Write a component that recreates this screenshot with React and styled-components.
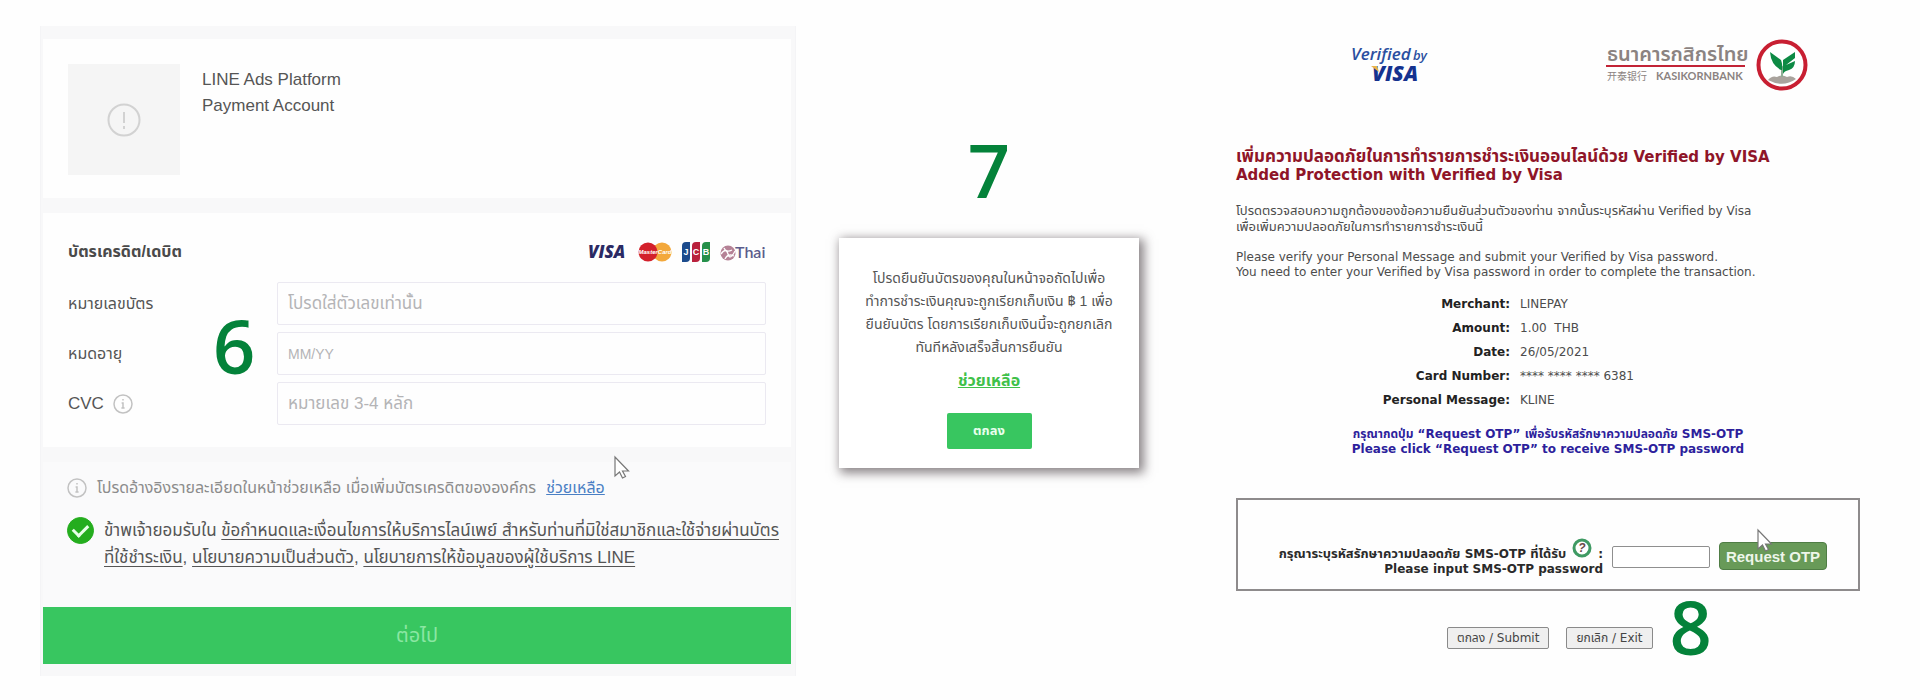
import React, { useState } from 'react'
import styled, { createGlobalStyle } from 'styled-components'

const GlobalStyle = createGlobalStyle`
  * {
    box-sizing: border-box;
  }
  body {
    margin: 0;
    background: #fefefe;
    font-family: "Liberation Sans", "Noto Sans Thai", sans-serif;
    color: #555;
  }
  p, h1, h2 {
    margin: 0;
  }
  input, button {
    font-family: inherit;
  }
  svg {
    flex: none;
    overflow: visible;
  }
`
const Page = styled.main`
  display: grid;
  grid-template-columns: minmax(0, 756fr) minmax(0, 300fr) minmax(0, 678fr);
  gap: 43px;
  align-items: start;
  padding: 26px 60px 24px 40px;
`
const Step = styled.div`
  color: #04823a;
  font-family: "Open Sans", sans-serif;
  font-size: 74px;
  font-weight: 600;
  line-height: 72px;
`

/* payment form */
const Panel = styled.form`
  position: relative;
  background: #f8f8f9;
  padding: 13px 4px 12px 2px;
  border-left: 1px solid #f4f4f6;
  border-right: 1px solid #f4f4f6;
`
const Section = styled.section`
  background: #fefefe;
  margin-bottom: 15px;
  padding: ${p => p.$pad};
`
const Account = styled.div`
  display: flex;
  gap: 22px;
`
const Thumb = styled.div`
  width: 112px;
  height: 111px;
  background: #f5f5f5;
  display: grid;
  place-items: center;
`
const AccountName = styled.p`
  padding-top: 3px;
  font-size: 17px;
  line-height: 26px;
`
const SectionHead = styled.div`
  display: flex;
  justify-content: space-between;
  align-items: center;
  height: 26px;
  margin-bottom: 17px;
`
const SectionTitle = styled.h2`
  font-size: 16px;
  font-weight: 700;
  color: #4a4a4a;
`
const Brands = styled.div`
  display: flex;
  align-items: center;
  gap: 10px;
`
const Field = styled.div`
  display: grid;
  grid-template-columns: 209px minmax(0, 1fr);
  align-items: center;
  & + & {
    margin-top: 7px;
  }
`
const FieldLabel = styled.label`
  display: flex;
  align-items: center;
  gap: 9px;
  font-size: ${p => p.$latin ? '17px' : '16px'};
  color: #555;
`
const TextInput = styled.input`
  width: 100%;
  height: 43px;
  padding: 0 10px;
  border: 1px solid #ebe9f1;
  border-radius: 2px;
  background: #fefefe;
  font-size: ${p => p.$latin ? '14px' : '17px'};
  outline: none;
  &::placeholder {
    color: #b4b4b6;
    opacity: 1;
  }
`
const Terms = styled.section`
  padding: 11px 20px 36px 24px;
  background: #fafafb;
`
const Notice = styled.div`
  display: flex;
  align-items: center;
  gap: 10px;
  height: 30px;
  font-size: 16px;
  color: #8c8c8c;
  white-space: nowrap;
`
const HelpLink = styled.a`
  color: #4a7fc4;
`
const Agree = styled.div`
  display: flex;
  gap: 10px;
  margin-top: 14px;
`
const Check = styled.input`
  appearance: none;
  flex: none;
  width: 27px;
  height: 27px;
  margin: 0;
  border-radius: 50%;
  border: 1px solid #24ad1e;
  display: grid;
  place-items: center;
  &:checked {
    background: #24ad1e;
  }
  &:checked::after {
    content: "";
    width: 12px;
    height: 7px;
    margin-bottom: 3px;
    border-left: 3px solid #e8ffe8;
    border-bottom: 3px solid #e8ffe8;
    rotate: -45deg;
  }
`
const AgreeText = styled.label`
  font-size: 17px;
  line-height: 27px;
  white-space: nowrap;
  a {
    color: #555;
    text-underline-offset: 3px;
  }
`
const NextButton = styled.button`
  display: block;
  width: 100%;
  height: 57px;
  border: none;
  background: #38c660;
  color: #8be6a3;
  font-size: 20px;
`
const StepSix = styled(Step)`
  position: absolute;
  left: 172px;
  top: 284px;
`
const Cursor = styled.svg`
  position: absolute;
  left: ${p => p.$left};
  top: ${p => p.$top};
`

/* confirm dialog */
const Middle = styled.section`
  display: flex;
  flex-direction: column;
  align-items: center;
  padding-top: 108px;
`
const Dialog = styled.div`
  width: 100%;
  margin-top: 32px;
  padding: 29px 16px 19px;
  background: #fff;
  box-shadow: 3px 3px 10px 2px rgba(60, 50, 55, 0.6);
  text-align: center;
`
const DialogText = styled.p`
  font-size: 14px;
  line-height: 23px;
  white-space: nowrap;
`
const DialogHelp = styled.a`
  display: block;
  margin: 10px 0 21px;
  font-size: 16px;
  line-height: 23px;
  font-weight: 700;
  color: #3fc14a;
`
const OkButton = styled.button`
  width: 85px;
  height: 36px;
  border: none;
  border-radius: 2px;
  background: #38c660;
  color: #e9ffee;
  font-size: 13px;
  font-weight: 700;
`

/* bank page */
const Bank = styled.section`
  padding-left: 54px;
  font-family: "DejaVu Sans", "Noto Sans Thai", sans-serif;
  font-size: 12px;
  line-height: 15px;
  color: #4c4c4c;
`
const Logos = styled.header`
  display: flex;
  justify-content: space-between;
  padding: 12px 52px 0 114px;
`
const BankBrand = styled.div`
  display: flex;
  gap: 10px;
`
const Thai = styled.span`
  font-size: ${p => p.$large ? '17px' : '13px'};
`
const Title = styled.h1`
  margin-top: 57px;
  font-size: 15px;
  line-height: 18px;
  color: #8f1528;
  white-space: nowrap;
`
const Copy = styled.p`
  margin-top: ${p => p.$gap};
  white-space: nowrap;
`
const Details = styled.table`
  margin-top: 12px;
  border-collapse: collapse;
  th, td {
    height: 24px;
    padding: 0;
    white-space: pre;
  }
  th {
    width: 274px;
    text-align: right;
    color: #222;
  }
  td {
    padding-left: 10px;
  }
`
const Hint = styled.p`
  margin-top: 15px;
  text-align: center;
  font-weight: 700;
  color: #2d1f9c;
  white-space: nowrap;
`
const OtpBox = styled.div`
  position: relative;
  display: flex;
  justify-content: flex-end;
  align-items: flex-start;
  gap: 9px;
  height: 93px;
  margin-top: 41px;
  padding: 42px 31px 0 0;
  border: 2px solid #8e8b8c;
`
const OtpLabel = styled.label`
  text-align: right;
  font-weight: 700;
  color: #2a2a2a;
  white-space: nowrap;
`
const OtpLine = styled.span`
  display: flex;
  justify-content: flex-end;
  align-items: flex-end;
  gap: 6px;
  height: ${p => p.$tall ? '20px' : '15px'};
  svg {
    margin-bottom: 4px;
  }
`
const OtpInput = styled.input`
  width: 98px;
  height: 22px;
  margin-top: 4px;
  border: 1px solid #8f8f8f;
  border-radius: 2px;
  background: #fff;
`
const OtpButton = styled.button`
  width: 108px;
  height: 28px;
  padding: 0;
  border: 1px solid #4f7d45;
  border-radius: 4px;
  background: #689a58;
  color: #eef6ea;
  font-family: "Liberation Sans", sans-serif;
  font-size: 15px;
  font-weight: 700;
`
const Actions = styled.div`
  display: flex;
  align-items: flex-start;
  gap: 17px;
  padding-left: 211px;
`
const PlainButton = styled.button`
  height: 22px;
  margin-top: 36px;
  padding: 0 9px;
  border: 1px solid #8a8a8a;
  border-radius: 2px;
  background: #efefef;
  color: #444;
  font-size: 12px;
  white-space: nowrap;
`

const InfoIcon = () => (
  <svg width="20" height="20" viewBox="0 0 20 20" fill="none" stroke="#c2c2c2">
    <circle cx="10" cy="10" r="9" strokeWidth="1.5" />
    <path d="M10 5v1.6M8.6 9H10v5M8.4 14h3.2" strokeWidth="1.5" />
  </svg>
)

const Pointer = ({ left, top }) => (
  <Cursor $left={left} $top={top} width="16" height="24" viewBox="0 0 16 24">
    <path d="M1 1v19l4.500-4 3 6 3-1.500-3-5.500h6z" fill="#fff" stroke="#777" strokeWidth="1.200" />
  </Cursor>
)

const CardBrands = () => (
  <Brands>
    <svg width="40" height="20" viewBox="0 0 40 20">
      <text x="0" y="16" fontFamily="Open Sans" fontSize="17" fontWeight="800" fontStyle="italic" fill="#2a2963">VISA</text>
    </svg>
    <svg width="34" height="20" viewBox="0 0 34 20">
      <circle cx="24" cy="10" r="9.500" fill="#f3a83b" />
      <circle cx="10" cy="10" r="9.500" fill="#d3202b" />
      <text x="17" y="12" textAnchor="middle" fontFamily="Liberation Sans" fontSize="6" fontWeight="700" fontStyle="italic" fill="#fff">MasterCard</text>
    </svg>
    <svg width="28" height="20" viewBox="0 0 28 20" fontFamily="Liberation Sans" fontSize="9" fontWeight="700" fill="#fff" textAnchor="middle">
      <path d="M4 0h4v16q0 4-4 4H0V4q0-4 4-4z" fill="#1c4b8c" />
      <path d="M14 0h4v16q0 4-4 4h-4V4q0-4 4-4z" fill="#b9213d" />
      <path d="M24 0h4v16q0 4-4 4h-4V4q0-4 4-4z" fill="#25904a" />
      <text x="4" y="13">J</text>
      <text x="14" y="13">C</text>
      <text x="24" y="13">B</text>
    </svg>
    <svg width="46" height="20" viewBox="0 0 46 20">
      <circle cx="8" cy="11" r="7.500" fill="#b58296" />
      <path d="M1 12q5-7 7 0t7-3M4 6q2 5 8 2M5 17q3-6 9-3" fill="none" stroke="#fff" strokeWidth="1.300" />
      <text x="15" y="16" fontFamily="Lato" fontSize="16" fontWeight="600" fill="#5c5c8c">Thai</text>
    </svg>
  </Brands>
)

const VerifiedByVisa = () => (
  <svg width="80" height="44" viewBox="0 0 80 44" fontFamily="Open Sans" fontStyle="italic">
    <text x="1" y="22" fontSize="17" fontWeight="600" fill="#2b4fa0">Verified</text>
    <text x="63" y="22" fontSize="13" fontWeight="600" fill="#2b4fa0">by</text>
    <text x="22" y="43" fontSize="21" fontWeight="800" fill="#15328f">VISA</text>
    <path d="M21 28h6l2 6z" fill="#eab54d" />
  </svg>
)

const KBank = () => (
  <BankBrand>
    <svg width="140" height="52" viewBox="0 0 140 52">
      <text x="1" y="23" fontFamily="Liberation Sans, Noto Sans Thai, sans-serif" fontSize="20" fontWeight="600" fill="#8b8381">ธนาคารกสิกรไทย</text>
      <rect x="0" y="27" width="139" height="2" fill="#c22336" />
      <text x="1" y="42" fontFamily="Noto Sans CJK SC" fontSize="10" fill="#8b8381">开泰银行</text>
      <text x="50" y="42" fontFamily="Lato" fontSize="11" fontWeight="700" fill="#8b8381">KASIKORNBANK</text>
    </svg>
    <svg width="52" height="52" viewBox="0 0 52 52">
      <circle cx="26" cy="27" r="23.500" fill="#fff" stroke="#c81f32" strokeWidth="4" />
      <path d="M12 42q4-5 9-3 5-3 10 0 5-2 9 2-13 9-28 1z" fill="#a9a39d" />
      <path d="M25 39V29l2-1v11z" fill="#8fae95" />
      <path d="M25 32q-10-5-11-18l11 8q2 5 1 10z" fill="#0d8a44" />
      <path d="M27 31V22l12-8v6l-9 7 9-4q0 7-6 9-5 1-6 4z" fill="#0d8a44" />
    </svg>
  </BankBrand>
)

const details = [
  ['Merchant', 'LINEPAY'],
  ['Amount', '1.00  THB'],
  ['Date', '26/05/2021'],
  ['Card Number', '**** **** **** 6381'],
  ['Personal Message', 'KLINE'],
]

const PaymentForm = () => {
  const [agree, setAgree] = useState(true)

  return (
    <Panel onSubmit={e => e.preventDefault()}>
      <Section $pad="25px 25px 23px">
        <Account>
          <Thumb>
            <svg width="34" height="34" viewBox="0 0 34 34" fill="none" stroke="#d2d2d2" strokeWidth="2">
              <circle cx="17" cy="17" r="15.500" />
              <path d="M17 9v11M17 23v3" />
            </svg>
          </Thumb>
          <AccountName>LINE Ads Platform<br />Payment Account</AccountName>
        </Account>
      </Section>
      <Section $pad="26px 25px 22px">
        <SectionHead>
          <SectionTitle>บัตรเครดิต/เดบิต</SectionTitle>
          <CardBrands />
        </SectionHead>
        <Field>
          <FieldLabel htmlFor="card">หมายเลขบัตร</FieldLabel>
          <TextInput id="card" type="text" placeholder="โปรดใส่ตัวเลขเท่านั้น" />
        </Field>
        <Field>
          <FieldLabel htmlFor="expiry">หมดอายุ</FieldLabel>
          <TextInput id="expiry" type="text" placeholder="MM/YY" $latin />
        </Field>
        <Field>
          <FieldLabel htmlFor="cvc" $latin>CVC <InfoIcon /></FieldLabel>
          <TextInput id="cvc" type="text" placeholder="หมายเลข 3-4 หลัก" />
        </Field>
      </Section>
      <Terms>
        <Notice>
          <InfoIcon />
          <span>โปรดอ้างอิงรายละเอียดในหน้าช่วยเหลือ เมื่อเพิ่มบัตรเครดิตขององค์กร</span>
          <HelpLink href="#help">ช่วยเหลือ</HelpLink>
        </Notice>
        <Agree>
          <Check id="agree" type="checkbox" checked={agree} onChange={e => setAgree(e.target.checked)} />
          <AgreeText htmlFor="agree">
            ข้าพเจ้ายอมรับใน <a href="#terms">ข้อกำหนดและเงื่อนไขการให้บริการไลน์เพย์ สำหรับท่านที่มิใช่สมาชิกและใช้จ่ายผ่านบัตร<br />
            ที่ใช้ชำระเงิน</a>, <a href="#privacy">นโยบายความเป็นส่วนตัว</a>, <a href="#data">นโยบายการให้ข้อมูลของผู้ใช้บริการ LINE</a>
          </AgreeText>
        </Agree>
      </Terms>
      <NextButton type="submit">ต่อไป</NextButton>
      <StepSix>6</StepSix>
      <Pointer left="573px" top="430px" />
    </Panel>
  )
}

const ConfirmDialog = () => (
  <Middle>
    <Step>7</Step>
    <Dialog>
      <DialogText>
        โปรดยืนยันบัตรของคุณในหน้าจอถัดไปเพื่อ<br />
        ทำการชำระเงินคุณจะถูกเรียกเก็บเงิน ฿ 1 เพื่อ<br />
        ยืนยันบัตร โดยการเรียกเก็บเงินนี้จะถูกยกเลิก<br />
        ทันทีหลังเสร็จสิ้นการยืนยัน
      </DialogText>
      <DialogHelp href="#help">ช่วยเหลือ</DialogHelp>
      <OkButton type="button">ตกลง</OkButton>
    </Dialog>
  </Middle>
)

const BankPage = () => (
  <Bank>
    <Logos>
      <VerifiedByVisa />
      <KBank />
    </Logos>
    <Title>
      <Thai $large>เพิ่มความปลอดภัยในการทำรายการชำระเงินออนไลน์ด้วย</Thai> Verified by VISA<br />
      Added Protection with Verified by Visa
    </Title>
    <Copy $gap="19px">
      <Thai>โปรดตรวจสอบความถูกต้องของข้อความยืนยันส่วนตัวของท่าน จากนั้นระบุรหัสผ่าน</Thai> Verified by Visa<br />
      <Thai>เพื่อเพิ่มความปลอดภัยในการทำรายการชำระเงินนี้</Thai>
    </Copy>
    <Copy $gap="15px">
      Please verify your Personal Message and submit your Verified by Visa password.<br />
      You need to enter your Verified by Visa password in order to complete the transaction.
    </Copy>
    <Details>
      <tbody>
        {details.map(([name, value]) => (
          <tr key={name}>
            <th scope="row">{name}:</th>
            <td>{value}</td>
          </tr>
        ))}
      </tbody>
    </Details>
    <Hint>
      กรุณากดปุ่ม “Request OTP” เพื่อรับรหัสรักษาความปลอดภัย SMS-OTP<br />
      Please click “Request OTP” to receive SMS-OTP password
    </Hint>
    <OtpBox>
      <OtpLabel htmlFor="otp">
        <OtpLine $tall>
          <span><Thai>กรุณาระบุรหัสรักษาความปลอดภัย</Thai> SMS-OTP <Thai>ที่ได้รับ</Thai></span>
          <svg width="20" height="20" viewBox="0 0 20 20">
            <circle cx="10" cy="10" r="8" fill="#fff" stroke="#3f9a63" strokeWidth="3" />
            <text x="10" y="14" textAnchor="middle" fontFamily="Liberation Sans" fontSize="12" fontWeight="700" fontStyle="italic" fill="#6a4a4a">?</text>
          </svg>
          <span>:</span>
        </OtpLine>
        <OtpLine>Please input SMS-OTP password</OtpLine>
      </OtpLabel>
      <OtpInput id="otp" type="text" />
      <OtpButton type="button">Request OTP</OtpButton>
      <Pointer left="519px" top="29px" />
    </OtpBox>
    <Actions>
      <PlainButton type="button">ตกลง / Submit</PlainButton>
      <PlainButton type="button">ยกเลิก / Exit</PlainButton>
      <Step>8</Step>
    </Actions>
  </Bank>
)

const App = () => {
  return (
    <>
      <GlobalStyle />
      <Page>
        <PaymentForm />
        <ConfirmDialog />
        <BankPage />
      </Page>
    </>
  )
}

export default App
